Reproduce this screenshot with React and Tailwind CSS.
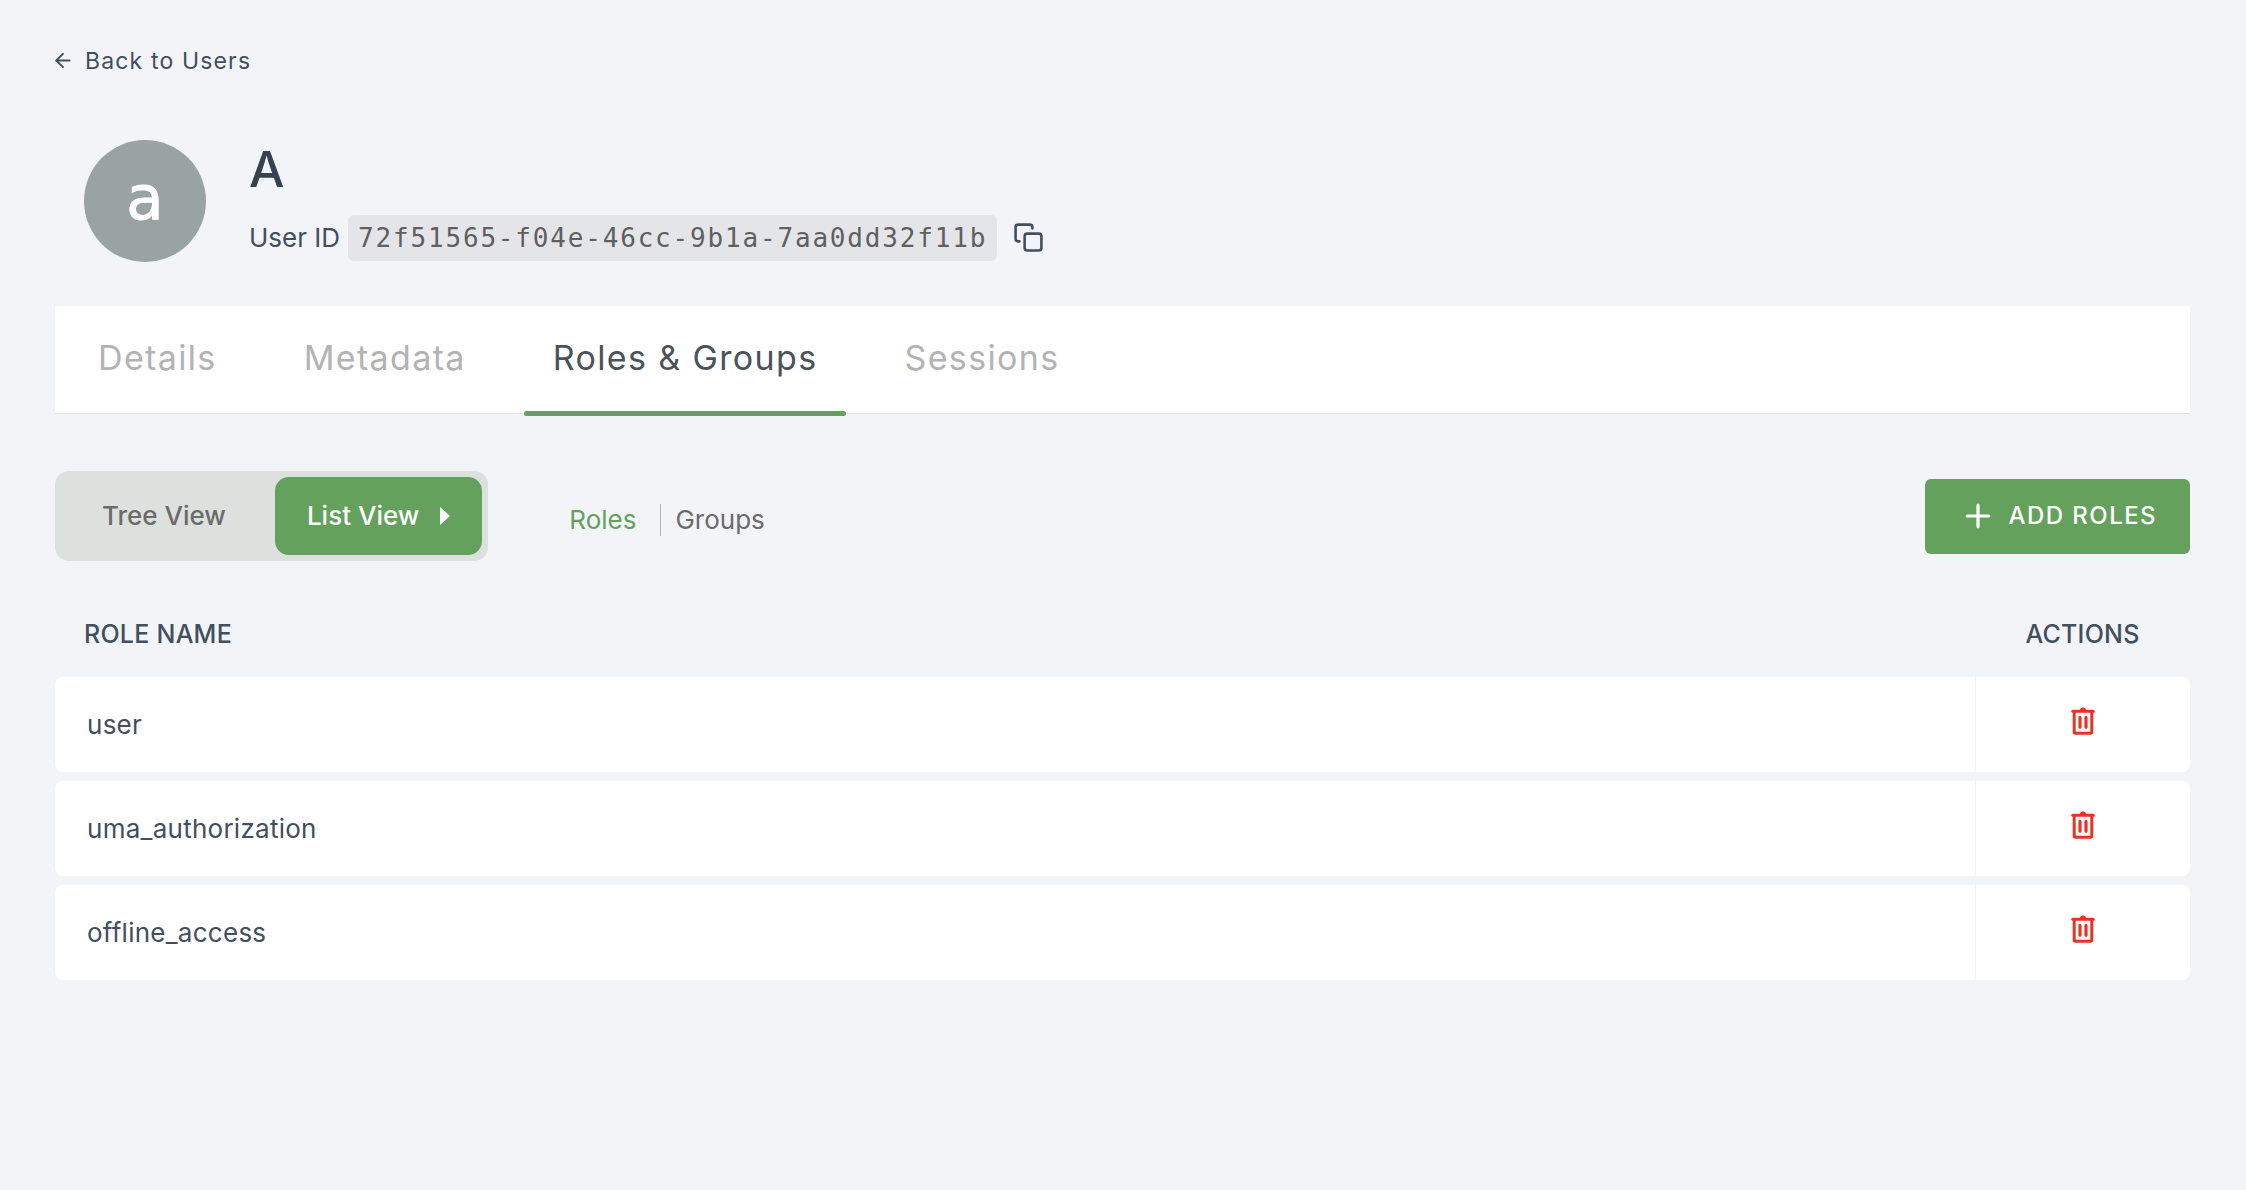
import { useState } from "react";

const TABS = ["Details", "Metadata", "Roles & Groups", "Sessions"];
const ROLES = ["user", "uma_authorization", "offline_access"];

function ArrowLeftIcon() {
  return (
    <svg width="16" height="16" viewBox="0 0 16 16" fill="none" stroke="currentColor" strokeWidth="1.9" strokeLinecap="round" strokeLinejoin="round">
      <path d="M14.6 7.5H1.2M8 0.9L1.2 7.5L8 14.1" />
    </svg>
  );
}

function CopyIcon() {
  return (
    <svg width="31" height="31" viewBox="0 0 24 24" fill="none" stroke="currentColor" strokeWidth="2" strokeLinecap="round" strokeLinejoin="round">
      <rect x="9" y="9" width="13" height="13" rx="2" />
      <path d="M5 15H4a2 2 0 0 1-2-2V4a2 2 0 0 1 2-2h9a2 2 0 0 1 2 2v1" />
    </svg>
  );
}

function PlusIcon() {
  return (
    <svg width="26" height="26" viewBox="0 0 26 26" fill="none" stroke="currentColor" strokeWidth="3.2" strokeLinecap="round">
      <path d="M13 2.2V23.8M2.2 13H23.8" />
    </svg>
  );
}

function TrashIcon() {
  return (
    <svg width="24" height="28" viewBox="0 0 24 28" fill="none" stroke="currentColor" strokeWidth="3" strokeLinecap="round" strokeLinejoin="round">
      <path d="M9 3.5a3 3 0 0 1 6 0z" fill="currentColor" stroke="none" />
      <path d="M1.8 4.2H22.2" />
      <path d="M3.2 4.5V25Q3.2 26.2 4.4 26.2H19.6Q20.8 26.2 20.8 25V4.5" />
      <path d="M9 10.4V20.2M15 10.4V20.2" strokeWidth="3.2" />
    </svg>
  );
}

export default function App() {
  const [tab, setTab] = useState("Roles & Groups");
  const [roles, setRoles] = useState(ROLES);

  const removeRole = (name) => {
    setRoles(roles.filter((r) => r !== name));
  };

  return (
    <div className="min-h-screen bg-[#f2f4f8] pt-[44px] pr-14 pb-12 pl-[55px] font-['Inter',sans-serif] text-[26px] leading-8 text-[#434e5e]">

      {/* BACK LINK */}
      <a href="#users" className="inline-flex items-center gap-[14px] text-[23px] leading-8 tracking-wider">
        <ArrowLeftIcon />
        Back to Users
      </a>

      {/* USER HEADER */}
      <header className="mt-[63px] flex items-center gap-[43px] pl-[29px]">
        <div className="flex size-[122px] items-center justify-center rounded-full bg-[#99a3a4] pb-[6px] font-['DejaVu_Sans',sans-serif] text-[61px] text-white [-webkit-text-stroke:1px_white]">
          a
        </div>
        <div>
          <h1 className="text-[50px] leading-[54px] font-medium text-[#364250]">A</h1>
          <div className="mt-[19px] flex items-center">
            <span>User ID</span>
            <code className="ml-2 rounded-md bg-[#e4e5e9] px-[10px] py-[7px] font-['DejaVu_Sans_Mono',monospace] tracking-[0.07em] text-[#5f5f5f]">
              72f51565-f04e-46cc-9b1a-7aa0dd32f11b
            </code>
            <button aria-label="Copy user ID" className="ml-4">
              <CopyIcon />
            </button>
          </div>
        </div>
      </header>

      {/* TABS */}
      <nav className="mt-11 flex gap-[29px] border-b border-[#dde1e6] bg-white px-[14px]">
        {TABS.map((name) => (
          <button
            key={name}
            onClick={() => setTab(name)}
            className={`relative px-[29px] pt-[32px] pb-[35px] text-[34px] leading-10 tracking-[0.04em] ${
              tab === name ? "text-[#4b525b]" : "text-[#b3b3b3]"
            }`}
          >
            {name}
            {tab === name && (
              <span className="absolute inset-x-0 -bottom-[3px] h-[5px] rounded-full bg-[#64a15d]" />
            )}
          </button>
        ))}
      </nav>

      {/* TOOLBAR */}
      <div className="mt-[57px] flex items-center">
        <div className="flex rounded-[14px] bg-[#dce1dd] p-[6px] font-medium">
          <button className="pr-[49px] pl-[41px] text-[#6b6b6b]">Tree View</button>
          <button className="flex h-[78px] items-center gap-[21px] rounded-[14px] bg-[#64a15d] px-8 text-white">
            List View
            <svg width="10" height="18" viewBox="0 0 10 18" fill="currentColor">
              <path d="M0 0L10 9L0 18z" />
            </svg>
          </button>
        </div>

        <div className="ml-[81px] flex items-center pt-2">
          <button className="pr-6 text-[#64a15d]">Roles</button>
          <button className="border-l border-[#b3b3b3] pl-[14px] text-[#6b6b6b]">Groups</button>
        </div>

        <button className="ml-auto flex h-[75px] items-center gap-[17px] rounded-md bg-[#64a15d] pr-[33px] pl-10 text-[24px] font-medium tracking-[0.06em] text-white">
          <PlusIcon />
          ADD ROLES
        </button>
      </div>

      {/* ROLES TABLE */}
      <table className="mt-11 w-full border-separate border-spacing-x-0 border-spacing-y-[9px]">
        <thead className="text-[25px] tracking-[0.01em]">
          <tr>
            <th className="pt-1 pb-[18px] pl-[29px] text-left font-medium">ROLE NAME</th>
            <th className="w-[215px] pt-1 pb-[18px] text-center font-medium">ACTIONS</th>
          </tr>
        </thead>
        <tbody>
          {roles.map((name) => (
            <tr key={name} className="h-[95px] bg-white">
              <td className="rounded-l-lg pl-8 tracking-[0.01em]">{name}</td>
              <td className="rounded-r-lg border-l border-[#f2f4f8]">
                <button
                  aria-label={`Remove ${name}`}
                  onClick={() => removeRole(name)}
                  className="mx-auto block pb-2 text-[#ea3323]"
                >
                  <TrashIcon />
                </button>
              </td>
            </tr>
          ))}
        </tbody>
      </table>

    </div>
  );
}
